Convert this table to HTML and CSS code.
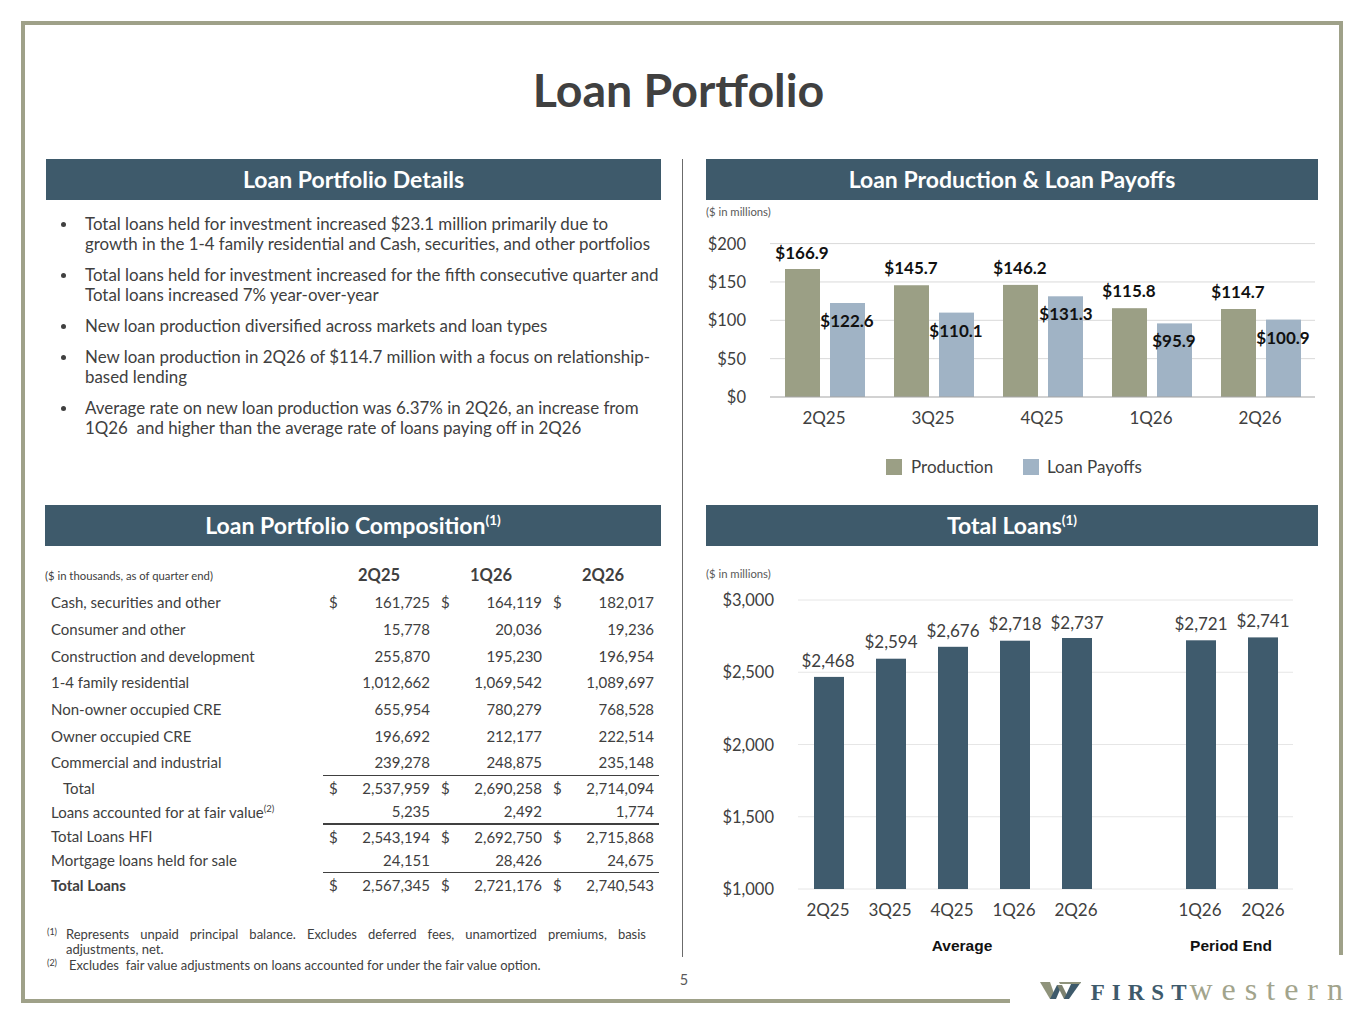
FILE: index.html
```html
<!DOCTYPE html>
<html lang="en">
<head>
<meta charset="utf-8">
<title>Loan Portfolio</title>
<link rel="stylesheet" href="styles.css">
</head>
<body>
<div class="slide">
  <div class="frame">
    <h1 class="title">Loan Portfolio</h1>
    <div class="grid">
      <section class="panel details">
        <h2 class="panel-head">Loan Portfolio Details</h2>
        <ul class="bullets">
          <li>Total loans held for investment increased $23.1 million primarily due to<br>growth in the 1-4 family residential and Cash, securities, and other portfolios</li>
          <li>Total loans held for investment increased for the fifth consecutive quarter and<br>Total loans increased 7% year-over-year</li>
          <li>New loan production diversified across markets and loan types</li>
          <li>New loan production in 2Q26 of $114.7 million with a focus on relationship-<br>based lending</li>
          <li>Average rate on new loan production was 6.37% in 2Q26, an increase from<br>1Q26&nbsp; and higher than the average rate of loans paying off in 2Q26</li>
        </ul>
      </section>

      <div class="divider"></div>

      <section class="panel production">
        <h2 class="panel-head">Loan Production &amp; Loan Payoffs</h2>
        <svg class="chart" width="614" height="305" viewBox="0 0 614 305">
          <text class="c-note" x="0" y="15.5">($ in millions)</text>
          <line class="gl" x1="64" x2="609" y1="43.6" y2="43.6"/>
          <line class="gl" x1="64" x2="609" y1="81.95" y2="81.95"/>
          <line class="gl" x1="64" x2="609" y1="120.3" y2="120.3"/>
          <line class="gl" x1="64" x2="609" y1="158.65" y2="158.65"/>
          <text class="c-axis" x="40" y="49.5">$200</text>
          <text class="c-axis" x="40" y="87.5">$150</text>
          <text class="c-axis" x="40" y="126">$100</text>
          <text class="c-axis" x="40" y="164.5">$50</text>
          <text class="c-axis" x="40" y="202.5">$0</text>

          <rect class="bar-prod" x="79" y="69" width="35" height="128"/>
          <rect class="bar-pay" x="124" y="103" width="35" height="94"/>
          <rect class="bar-prod" x="188" y="85.25" width="35" height="111.75"/>
          <rect class="bar-pay" x="233" y="112.6" width="35" height="84.4"/>
          <rect class="bar-prod" x="297" y="84.9" width="35" height="112.1"/>
          <rect class="bar-pay" x="342" y="96.3" width="35" height="100.7"/>
          <rect class="bar-prod" x="406" y="108.2" width="35" height="88.8"/>
          <rect class="bar-pay" x="451" y="123.4" width="35" height="73.6"/>
          <rect class="bar-prod" x="515" y="109" width="35" height="88"/>
          <rect class="bar-pay" x="560" y="119.6" width="35" height="77.4"/>
          <line class="axis" x1="64" x2="609" y1="197" y2="197"/>

          <text class="c-val" x="96" y="59">$166.9</text>
          <text class="c-val" x="141" y="127">$122.6</text>
          <text class="c-val" x="205" y="74">$145.7</text>
          <text class="c-val" x="250" y="137">$110.1</text>
          <text class="c-val" x="314" y="74">$146.2</text>
          <text class="c-val" x="360" y="120">$131.3</text>
          <text class="c-val" x="423" y="97">$115.8</text>
          <text class="c-val" x="468" y="147">$95.9</text>
          <text class="c-val" x="532" y="98">$114.7</text>
          <text class="c-val" x="577" y="144">$100.9</text>

          <text class="c-cat" x="118" y="224">2Q25</text>
          <text class="c-cat" x="227" y="224">3Q25</text>
          <text class="c-cat" x="336" y="224">4Q25</text>
          <text class="c-cat" x="445" y="224">1Q26</text>
          <text class="c-cat" x="554" y="224">2Q26</text>

          <rect class="bar-prod" x="180" y="259" width="16" height="16"/>
          <text class="c-leg" x="205" y="273">Production</text>
          <rect class="bar-pay" x="317" y="259" width="16" height="16"/>
          <text class="c-leg" x="341" y="273">Loan Payoffs</text>
        </svg>
      </section>

      <section class="panel composition">
        <h2 class="panel-head">Loan Portfolio Composition<sup class="fn">(1)</sup></h2>
        <table class="comp">
          <colgroup>
            <col class="c-label"><col class="c-cur"><col class="c-num"><col class="c-cur"><col class="c-num"><col class="c-cur"><col class="c-num">
          </colgroup>
          <tr class="head">
            <td class="caption">($ in thousands, as of quarter end)</td>
            <th colspan="2">2Q25</th>
            <th colspan="2">1Q26</th>
            <th colspan="2">2Q26</th>
          </tr>
          <tr class="r1"><td class="lbl">Cash, securities and other</td><td class="cur">$</td><td class="num">161,725</td><td class="cur">$</td><td class="num">164,119</td><td class="cur">$</td><td class="num">182,017</td></tr>
          <tr class="r1"><td class="lbl">Consumer and other</td><td class="cur"></td><td class="num">15,778</td><td class="cur"></td><td class="num">20,036</td><td class="cur"></td><td class="num">19,236</td></tr>
          <tr class="r1"><td class="lbl">Construction and development</td><td class="cur"></td><td class="num">255,870</td><td class="cur"></td><td class="num">195,230</td><td class="cur"></td><td class="num">196,954</td></tr>
          <tr class="r1"><td class="lbl">1-4 family residential</td><td class="cur"></td><td class="num">1,012,662</td><td class="cur"></td><td class="num">1,069,542</td><td class="cur"></td><td class="num">1,089,697</td></tr>
          <tr class="r1"><td class="lbl">Non-owner occupied CRE</td><td class="cur"></td><td class="num">655,954</td><td class="cur"></td><td class="num">780,279</td><td class="cur"></td><td class="num">768,528</td></tr>
          <tr class="r1"><td class="lbl">Owner occupied CRE</td><td class="cur"></td><td class="num">196,692</td><td class="cur"></td><td class="num">212,177</td><td class="cur"></td><td class="num">222,514</td></tr>
          <tr class="r1"><td class="lbl">Commercial and industrial</td><td class="cur"></td><td class="num">239,278</td><td class="cur"></td><td class="num">248,875</td><td class="cur"></td><td class="num">235,148</td></tr>
          <tr class="r2 rule"><td class="lbl indent">Total</td><td class="cur">$</td><td class="num">2,537,959</td><td class="cur">$</td><td class="num">2,690,258</td><td class="cur">$</td><td class="num">2,714,094</td></tr>
          <tr class="r2"><td class="lbl">Loans accounted for at fair value<sup class="tfn">(2)</sup></td><td class="cur"></td><td class="num">5,235</td><td class="cur"></td><td class="num">2,492</td><td class="cur"></td><td class="num">1,774</td></tr>
          <tr class="r2 rule thick"><td class="lbl">Total Loans HFI</td><td class="cur">$</td><td class="num">2,543,194</td><td class="cur">$</td><td class="num">2,692,750</td><td class="cur">$</td><td class="num">2,715,868</td></tr>
          <tr class="r2"><td class="lbl">Mortgage loans held for sale</td><td class="cur"></td><td class="num">24,151</td><td class="cur"></td><td class="num">28,426</td><td class="cur"></td><td class="num">24,675</td></tr>
          <tr class="r2 rule"><td class="lbl strong">Total Loans</td><td class="cur">$</td><td class="num">2,567,345</td><td class="cur">$</td><td class="num">2,721,176</td><td class="cur">$</td><td class="num">2,740,543</td></tr>
        </table>
        <div class="notes">
          <div class="note">
            <span class="mark">(1)</span>
            <p class="note-text"><span class="just">Represents unpaid principal balance. Excludes deferred fees, unamortized premiums, basis</span><span class="line">adjustments, net.</span></p>
          </div>
          <div class="note">
            <span class="mark">(2)</span>
            <p class="note-text shifted">Excludes&nbsp; fair value adjustments on loans accounted for under the fair value option.</p>
          </div>
        </div>
      </section>

      <section class="panel total">
        <h2 class="panel-head">Total Loans<sup class="fn">(1)</sup></h2>
        <svg class="chart" width="614" height="411" viewBox="0 0 614 411">
          <text class="c-note" x="0" y="31.5">($ in millions)</text>
          <line class="gl light" x1="92" x2="587" y1="54" y2="54"/>
          <line class="gl light" x1="92" x2="587" y1="126.25" y2="126.25"/>
          <line class="gl light" x1="92" x2="587" y1="198.5" y2="198.5"/>
          <line class="gl light" x1="92" x2="587" y1="270.75" y2="270.75"/>
          <line class="gl light" x1="92" x2="587" y1="343" y2="343"/>
          <text class="c-axis" x="68" y="59.5">$3,000</text>
          <text class="c-axis" x="68" y="131.5">$2,500</text>
          <text class="c-axis" x="68" y="204.5">$2,000</text>
          <text class="c-axis" x="68" y="276.5">$1,500</text>
          <text class="c-axis" x="68" y="348.5">$1,000</text>

          <rect class="bar-total" x="108" y="130.9" width="30" height="212.1"/>
          <rect class="bar-total" x="170" y="112.7" width="30" height="230.3"/>
          <rect class="bar-total" x="232" y="100.8" width="30" height="242.2"/>
          <rect class="bar-total" x="294" y="94.7" width="30" height="248.3"/>
          <rect class="bar-total" x="356" y="92" width="30" height="251"/>
          <rect class="bar-total" x="480" y="94.3" width="30" height="248.7"/>
          <rect class="bar-total" x="542" y="91.4" width="30" height="251.6"/>

          <text class="c-val2" x="122" y="121">$2,468</text>
          <text class="c-val2" x="185" y="102">$2,594</text>
          <text class="c-val2" x="247" y="91">$2,676</text>
          <text class="c-val2" x="309" y="84">$2,718</text>
          <text class="c-val2" x="371" y="83">$2,737</text>
          <text class="c-val2" x="495" y="84">$2,721</text>
          <text class="c-val2" x="557" y="81">$2,741</text>

          <text class="c-cat" x="122" y="370">2Q25</text>
          <text class="c-cat" x="184" y="370">3Q25</text>
          <text class="c-cat" x="246" y="370">4Q25</text>
          <text class="c-cat" x="308" y="370">1Q26</text>
          <text class="c-cat" x="370" y="370">2Q26</text>
          <text class="c-cat" x="494" y="370">1Q26</text>
          <text class="c-cat" x="557" y="370">2Q26</text>

          <text class="c-group" x="256" y="404.5">Average</text>
          <text class="c-group" x="525" y="404.5">Period End</text>
        </svg>
      </section>
    </div>

    <footer class="foot">
      <span></span>
      <span class="page">5</span>
      <div class="logo">
        <svg class="mark-w" width="41" height="17" viewBox="0 0 41 17">
          <polygon class="w-olive" points="0,0 10,0 16,17 10,17"/>
          <polygon class="w-slate" points="10,17 16,17 22,3 17,3"/>
          <polygon class="w-olive2" points="17,3 22,3 29,17 24,17"/>
          <polygon class="w-slate" points="24,17 29,17 41,0 32,0"/>
          <polygon class="w-olive" points="19,0 41,0 40,2 20,2"/>
        </svg>
        <span class="first">FIRST</span><span class="western">western</span>
      </div>
    </footer>
  </div>
</div>
</body>
</html>
```

FILE: styles.css
```css
* { box-sizing: border-box; }

html, body {
  margin: 0;
  padding: 0;
  background: #ffffff;
}

body {
  width: 1365px;
  height: 1024px;
  overflow: hidden;
  font-family: Lato, "Open Sans", "Liberation Sans", sans-serif;
  color: #404040;
}

.slide {
  padding: 21px 0 0 21px;
  height: 1024px;
}

.frame {
  position: relative;
  width: 1322px;
  height: 982px;
  border-top: 4px solid #9fa189;
  border-left: 4px solid #9fa189;
  display: flex;
  flex-direction: column;
}

/* right border stops short of the logo area */
.frame::after {
  content: "";
  position: absolute;
  top: 0;
  right: 0;
  width: 4px;
  height: 930px;
  background: #9fa189;
}

/* bottom border stops before the logo */
.frame::before {
  content: "";
  position: absolute;
  left: 0;
  bottom: 0;
  width: 985px;
  height: 4px;
  background: #9fa189;
}

.title {
  margin: 0;
  padding: 38px 11px 0 0;
  height: 90px;
  line-height: 52px;
  text-align: center;
  font-size: 46.5px;
  font-weight: 700;
  color: #404040;
}

.grid {
  margin: 44px 0 0 21px;
  display: grid;
  grid-template-columns: 615px 1px 614px;
  grid-template-rows: 346px 452px;
  column-gap: 21px;
}

.divider {
  grid-column: 2;
  grid-row: 1 / span 2;
  background: #6b6b6b;
}

.details { grid-column: 1; grid-row: 1; }
.production { grid-column: 3; grid-row: 1; margin-left: 2px; }
.composition { grid-column: 1; grid-row: 2; margin-left: -1px; }
.total { grid-column: 3; grid-row: 2; margin-left: 2px; }

.panel-head {
  margin: 0;
  height: 41px;
  line-height: 41px;
  background: #3e5a6b;
  color: #ffffff;
  text-align: center;
  font-size: 23px;
  font-weight: 700;
}

.fn {
  font-size: 13.5px;
  vertical-align: 9px;
  line-height: 0;
}

/* bullets */
.bullets {
  list-style: none;
  margin: 14px 0 0 0;
  padding: 0;
}

.bullets li {
  position: relative;
  padding-left: 39px;
  margin-bottom: 11px;
  font-size: 16.9px;
  line-height: 20px;
  white-space: nowrap;
}

.bullets li::before {
  content: "";
  position: absolute;
  left: 15px;
  top: 8px;
  width: 5px;
  height: 5px;
  border-radius: 50%;
  background: #404040;
}

/* charts */
.chart {
  display: block;
  font-family: Lato, "Open Sans", sans-serif;
}

.c-note { font-size: 11.3px; fill: #595959; }
.c-axis { font-size: 16.5px; fill: #404040; text-anchor: end; }
.c-cat { font-size: 17px; fill: #404040; text-anchor: middle; }
.c-val { font-size: 17px; font-weight: 700; fill: #111111; text-anchor: middle; }
.c-val2 { font-size: 17px; fill: #404040; text-anchor: middle; }
.c-leg { font-size: 17px; fill: #404040; }
.c-group {
  font-family: "Liberation Sans", Arial, sans-serif;
  font-size: 15.5px;
  font-weight: 700;
  fill: #111111;
  text-anchor: middle;
}

.gl { stroke: #d9d9d9; stroke-width: 1; }
.gl.light { stroke: #e6e6e6; }
.axis { stroke: #a6a6a6; stroke-width: 1.2; }

.bar-prod { fill: #9b9f85; }
.bar-pay { fill: #a0b3c5; }
.bar-total { fill: #3f5b6d; }

/* composition table */
.comp {
  margin-top: 15px;
  width: 614px;
  border-collapse: collapse;
  table-layout: fixed;
  font-size: 15px;
  color: #404040;
}

.c-label { width: 278px; }
.c-cur { width: 22px; }
.c-num { width: 90px; }

.comp td, .comp th {
  padding: 0;
  white-space: nowrap;
}

.comp .head { height: 28px; }
.comp .head th {
  font-size: 16.5px;
  font-weight: 700;
  text-align: center;
}

.caption {
  font-size: 11.3px;
  color: #404040;
  vertical-align: middle;
}

.comp .r1 { height: 26.67px; }
.comp .r2 { height: 24.25px; }

.lbl { padding-left: 6px !important; }
.lbl.indent { padding-left: 18px !important; }
.lbl.strong { font-weight: 700; }

.cur { padding-left: 6px !important; text-align: left; }
.num { padding-right: 5px !important; text-align: right; }

.rule .cur, .rule .num { border-top: 1px solid #404040; }
.rule.thick .cur, .rule.thick .num { border-top: 2px solid #404040; }

.tfn {
  font-size: 9.5px;
  vertical-align: 6px;
  line-height: 0;
}

/* footnotes */
.notes {
  margin-top: 30px;
  font-size: 13px;
  line-height: 15.5px;
  color: #404040;
}

.note {
  display: flex;
  align-items: flex-start;
}

.mark {
  width: 21px;
  padding-left: 2px;
  font-size: 9px;
  line-height: 10px;
  flex: none;
}

.note-text {
  margin: 0;
  width: 580px;
}

.note-text .just {
  display: block;
  text-align: justify;
  text-align-last: justify;
}

.note-text .line { display: block; }

.note-text.shifted { padding-left: 3px; }

/* footer */
.foot {
  flex: 1;
  display: grid;
  grid-template-columns: 1fr auto 1fr;
  align-items: start;
}

.page {
  font-size: 14.5px;
  line-height: 46px;
  color: #595959;
}

.logo {
  justify-self: end;
  display: flex;
  align-items: baseline;
  padding-top: 19px;
  line-height: 26px;
}

.mark-w {
  align-self: flex-start;
  margin: 6px 10px 0 0;
}

.w-olive { fill: #8f937b; }
.w-olive2 { fill: #7d8270; }
.w-slate { fill: #3e5a6b; }

.first {
  font-family: "Liberation Serif", "Times New Roman", serif;
  font-weight: 700;
  font-size: 23px;
  letter-spacing: 7px;
  color: #3e5a6b;
  margin-right: -4px;
}

.western {
  font-family: "Liberation Serif", "Times New Roman", serif;
  font-size: 32px;
  letter-spacing: 9px;
  margin-right: -9px;
  color: #a2a48c;
}
```
